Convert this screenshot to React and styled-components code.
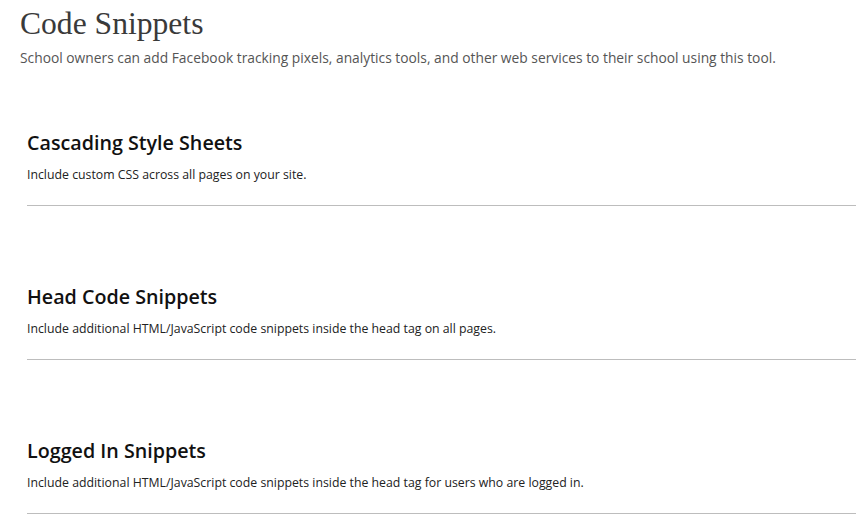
import React from 'react';
import styled, { createGlobalStyle } from 'styled-components';

const GlobalStyle = createGlobalStyle`
  html, body {
    margin: 0;
    padding: 0;
    background: #fff;
    overflow: hidden;
  }
`;

const Page = styled.div`
  padding: 6px 0 0 20px;
  font-family: "Open Sans", "Noto Sans", sans-serif;
`;

const Title = styled.h1`
  margin: 0;
  font-family: "Liberation Serif", "DejaVu Serif", serif;
  font-weight: 400;
  font-size: 31.6px;
  line-height: 36px;
  color: #3a3a3a;
`;

const Lead = styled.p`
  margin: 6px 0 0;
  font-size: 13.8px;
  line-height: 20px;
  color: #555;
`;

const Sections = styled.div`
  margin-left: 7px;
  margin-top: 62px;
`;

const Section = styled.section`
  padding-top: ${(p) => (p.first ? '0' : '78px')};
  border-bottom: 1px solid #bdbdbd;
`;

const Heading = styled.h2`
  margin: 0;
  font-size: 19.7px;
  line-height: 26px;
  font-weight: 600;
  color: #111;
`;

const Desc = styled.p`
  margin: 10px 0 0;
  padding-bottom: 22px;
  font-size: 12.3px;
  line-height: 17px;
  color: #222;
`;

const sections = [
  { heading: 'Cascading Style Sheets', text: 'Include custom CSS across all pages on your site.' },
  { heading: 'Head Code Snippets', text: 'Include additional HTML/JavaScript code snippets inside the head tag on all pages.' },
  { heading: 'Logged In Snippets', text: 'Include additional HTML/JavaScript code snippets inside the head tag for users who are logged in.' },
];

export default function App() {
  return (
    <Page>
      <GlobalStyle />
      <Title>Code Snippets</Title>
      <Lead>
        School owners can add Facebook tracking pixels, analytics tools, and other web services to their school using this tool.
      </Lead>
      <Sections>
        {sections.map((s, i) => (
          <Section key={i} first={i === 0}>
            <Heading>{s.heading}</Heading>
            <Desc>{s.text}</Desc>
          </Section>
        ))}
      </Sections>
    </Page>
  );
}
